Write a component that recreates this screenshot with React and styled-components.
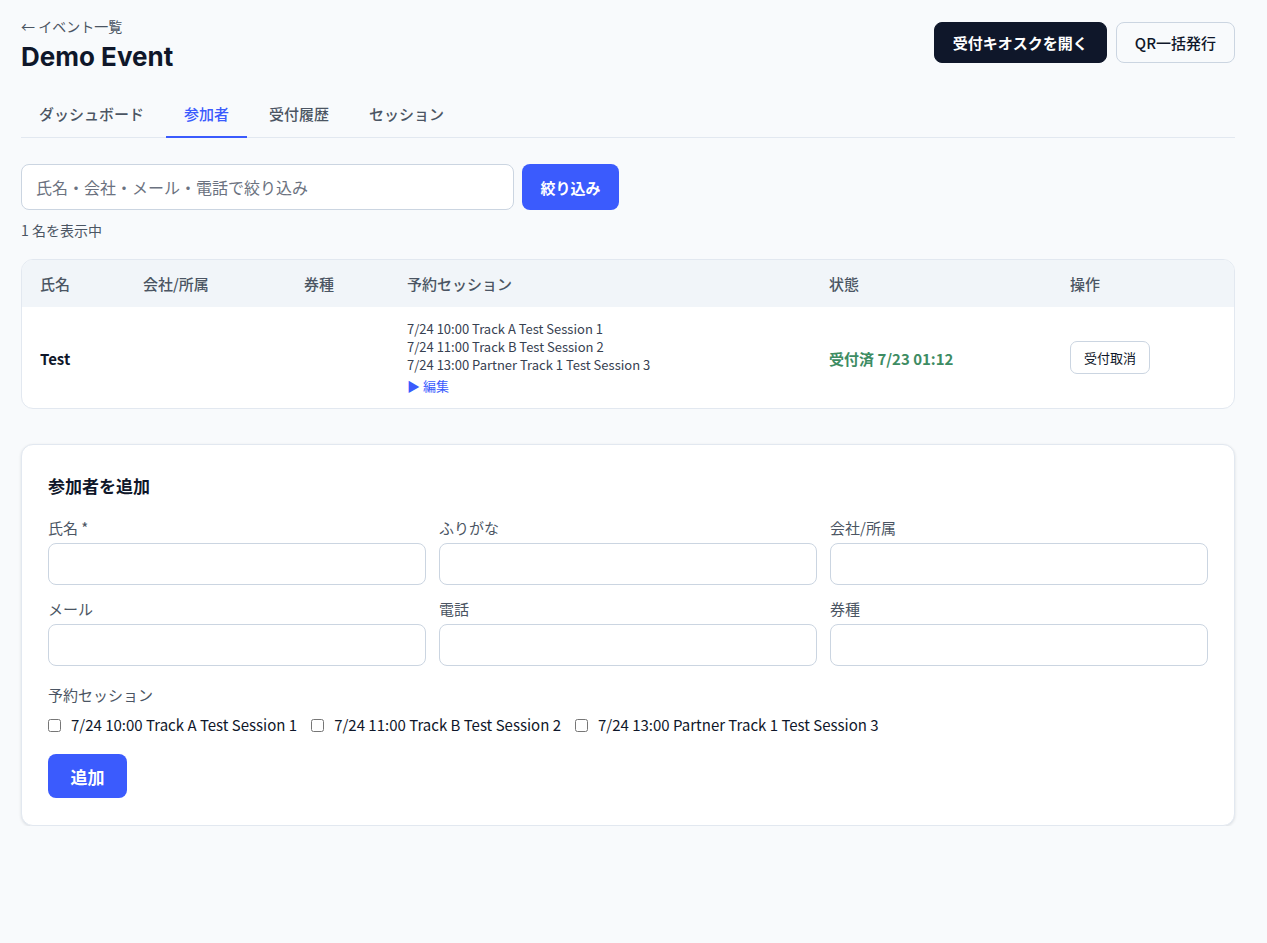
import React from 'react';
import styled, { createGlobalStyle } from 'styled-components';

const GlobalStyle = createGlobalStyle`
	body {
		margin: 0;
		background: #f8fafc;
		font-family: "Noto Sans CJK JP", sans-serif;
		color: #0f172a;
	}
	* { box-sizing: border-box; }
`

const sessions = [
	'7/24 10:00 Track A Test Session 1',
	'7/24 11:00 Track B Test Session 2',
	'7/24 13:00 Partner Track 1 Test Session 3',
];

const tabs = ['ダッシュボード', '参加者', '受付履歴', 'セッション'];

const fields = ['氏名 *', 'ふりがな', '会社/所属', 'メール', '電話', '券種'];

const App = () => (
	<>
		<GlobalStyle />
		<Page>
			<Header>
				<div>
					<BackLink href="#">← イベント一覧</BackLink>
					<Title>Demo Event</Title>
				</div>
				<Actions>
					<Button dark>受付キオスクを開く</Button>
					<Button>QR一括発行</Button>
				</Actions>
			</Header>

			<Tabs>
				{tabs.map((t) => (
					<Tab key={t} active={t === '参加者'}>{t}</Tab>
				))}
			</Tabs>

			<SearchRow>
				<SearchInput placeholder="氏名・会社・メール・電話で絞り込み" />
				<PrimaryButton>絞り込み</PrimaryButton>
			</SearchRow>
			<Count>1 名を表示中</Count>

			<TableCard>
				<Table>
					<colgroup>
						<col style={{ width: 103 }} />
						<col style={{ width: 161 }} />
						<col style={{ width: 103 }} />
						<col style={{ width: 422 }} />
						<col style={{ width: 241 }} />
						<col />
					</colgroup>
					<thead>
						<tr>
							<Th>氏名</Th>
							<Th>会社/所属</Th>
							<Th>券種</Th>
							<Th>予約セッション</Th>
							<Th>状態</Th>
							<Th>操作</Th>
						</tr>
					</thead>
					<tbody>
						<tr>
							<Td><Name>Test</Name></Td>
							<Td></Td>
							<Td></Td>
							<Td>
								<SessionList>
									{sessions.map((s) => <div key={s}>{s}</div>)}
									<EditLink>▶ 編集</EditLink>
								</SessionList>
							</Td>
							<Td><Status>受付済 7/23 01:12</Status></Td>
							<Td><SmallButton>受付取消</SmallButton></Td>
						</tr>
					</tbody>
				</Table>
			</TableCard>

			<FormCard>
				<FormTitle>参加者を追加</FormTitle>
				<FieldGrid>
					{fields.map((f) => (
						<Field key={f}>
							<Label>{f}</Label>
							<TextInput />
						</Field>
					))}
				</FieldGrid>
				<Label>予約セッション</Label>
				<Checks>
					{sessions.map((s) => (
						<CheckLabel key={s}>
							<input type="checkbox" />
							{s}
						</CheckLabel>
					))}
				</Checks>
				<AddButton>追加</AddButton>
			</FormCard>
		</Page>
	</>
);

export default App;

const Page = styled.div`
	width: 1214px;
	margin-left: 21px;
	padding-top: 16px;
`

const Header = styled.div`
	display: flex;
	justify-content: space-between;
	align-items: flex-start;
`

const BackLink = styled.a`
	display: block;
	font-size: 14px;
	color: #4b5563;
	text-decoration: none;
	line-height: 20px;
`

const Title = styled.h1`
	margin: 3px 0 0;
	font-family: Inter, "Noto Sans CJK JP", sans-serif;
	font-size: 26px;
	font-weight: 700;
	line-height: 36px;
	color: #0f172a;
`

const Actions = styled.div`
	display: flex;
	gap: 9px;
	margin-top: 6px;
`

const Button = styled.button`
	height: 41px;
	padding: 0 18px;
	border-radius: 8px;
	font-family: inherit;
	font-size: 15px;
	font-weight: ${(p) => (p.dark ? 700 : 500)};
	background: ${(p) => (p.dark ? '#0f172a' : '#f8fafc')};
	color: ${(p) => (p.dark ? '#fff' : '#0f172a')};
	border: 1px solid ${(p) => (p.dark ? '#0f172a' : '#cbd5e1')};
`

const Tabs = styled.div`
	display: flex;
	gap: 4px;
	margin-top: 21px;
	border-bottom: 1px solid #e2e8f0;
`

const Tab = styled.div`
	padding: 0 18px;
	height: 42px;
	line-height: 35px;
	font-size: 15px;
	font-weight: 500;
	color: ${(p) => (p.active ? '#3b5bfd' : '#4b5563')};
	border-bottom: 2px solid ${(p) => (p.active ? '#3b5bfd' : 'transparent')};
	margin-bottom: -1px;
`

const SearchRow = styled.div`
	display: flex;
	gap: 8px;
	margin-top: 26px;
`

const SearchInput = styled.input`
	width: 493px;
	height: 46px;
	padding: 0 14px;
	border: 1px solid #cbd5e1;
	border-radius: 8px;
	background: #fff;
	font-family: inherit;
	font-size: 16px;
	&::placeholder { color: #6b7280; }
`

const PrimaryButton = styled.button`
	width: 97px;
	height: 46px;
	border: 0;
	border-radius: 8px;
	background: #3b5bfd;
	color: #fff;
	font-family: inherit;
	font-size: 15px;
	font-weight: 700;
`

const Count = styled.div`
	margin-top: 10px;
	font-size: 14px;
	color: #4b5563;
	line-height: 20px;
`

const TableCard = styled.div`
	margin-top: 19px;
	background: #fff;
	border: 1px solid #e2e8f0;
	border-radius: 12px;
	overflow: hidden;
`

const Table = styled.table`
	width: 100%;
	border-collapse: collapse;
	table-layout: fixed;
`

const Th = styled.th`
	background: #f1f5f9;
	height: 47px;
	padding: 0 18px;
	text-align: left;
	font-size: 15px;
	font-weight: 500;
	color: #4b5563;
`

const Td = styled.td`
	height: 101px;
	padding: 0 18px;
	vertical-align: middle;
`

const Name = styled.span`
	font-size: 15px;
	font-weight: 700;
`

const SessionList = styled.div`
	font-size: 13px;
	line-height: 17.7px;
	color: #374151;
	white-space: nowrap;
`

const EditLink = styled.div`
	margin-top: 4px;
	color: #3b5bfd;
`

const Status = styled.span`
	font-size: 15px;
	font-weight: 700;
	color: #3d8c63;
`

const SmallButton = styled.button`
	height: 33px;
	padding: 0 13px;
	border: 1px solid #cbd5e1;
	border-radius: 7px;
	background: #fff;
	font-family: inherit;
	font-size: 13px;
	color: #0f172a;
`

const FormCard = styled.div`
	margin-top: 35px;
	background: #fff;
	border: 1px solid #e2e8f0;
	border-radius: 12px;
	box-shadow: 0 1px 3px rgba(15, 23, 42, 0.12);
	padding: 28px 26px 27px;
`

const FormTitle = styled.h2`
	margin: 0 0 18px;
	font-size: 17px;
	font-weight: 700;
	line-height: 26px;
`

const FieldGrid = styled.div`
	display: grid;
	grid-template-columns: repeat(3, 1fr);
	column-gap: 13px;
	row-gap: 13px;
	margin-bottom: 18px;
`

const Field = styled.div`
	display: flex;
	flex-direction: column;
`

const Label = styled.div`
	font-size: 15px;
	color: #4b5563;
	line-height: 22px;
	margin-bottom: 4px;
`

const TextInput = styled.input`
	height: 42px;
	border: 1px solid #cbd5e1;
	border-radius: 8px;
	background: #fff;
	font-family: inherit;
	font-size: 15px;
	padding: 0 12px;
`

const Checks = styled.div`
	display: flex;
	gap: 14px;
	margin-top: 8px;
`

const CheckLabel = styled.label`
	display: flex;
	align-items: center;
	gap: 6px;
	font-size: 15px;
	color: #0f172a;
	line-height: 22px;
	input {
		margin: 0 4px 0 0;
		width: 13px;
		height: 13px;
	}
`

const AddButton = styled.button`
	margin-top: 18px;
	width: 79px;
	height: 44px;
	border: 0;
	border-radius: 8px;
	background: #3b5bfd;
	color: #fff;
	font-family: inherit;
	font-size: 17px;
	font-weight: 700;
`
